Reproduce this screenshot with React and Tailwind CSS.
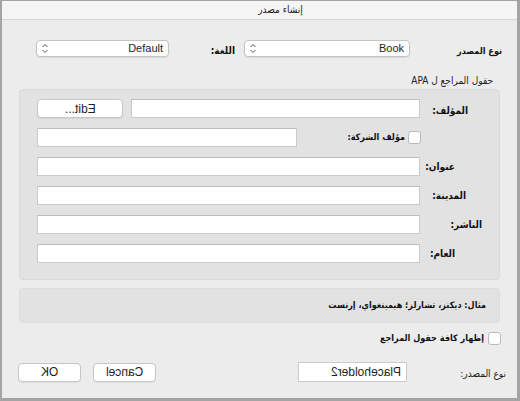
import React from "react";

const font = { fontFamily: "'Liberation Sans', 'DejaVu Sans', sans-serif" };
const ar = { fontFamily: "'DejaVu Sans Condensed', 'DejaVu Sans', sans-serif" };

function Chevrons() {
  return (
    <svg width="8" height="11" viewBox="0 0 8 11" className="shrink-0">
      <path d="M1.5 4 L4 1.5 L6.5 4" fill="none" stroke="#555" strokeWidth="1" />
      <path d="M1.5 7 L4 9.5 L6.5 7" fill="none" stroke="#555" strokeWidth="1" />
    </svg>
  );
}

function Select({ value, w }) {
  return (
    <div
      className={`${w} h-[17px] bg-white rounded-[4px] border border-[#c4c4c4] shadow-[0_1px_1px_rgba(0,0,0,0.08)] flex items-center justify-between pl-[4px] pr-[5px]`}
      dir="rtl"
    >
      <span className="text-[11px] text-[#1e1e1e] leading-none">{value}</span>
      <Chevrons />
    </div>
  );
}

function Input({ w }) {
  return <div className={`${w} h-[19px] bg-white border border-[#cbcbcb] border-t-[#bdbdbd] shrink-0`} />;
}

function Mirror({ children }) {
  return (
    <span dir="ltr" className="inline-block [transform:scaleX(-1)] text-[12px] text-[#1e1e1e] leading-none">
      {children}
    </span>
  );
}

function Button({ w, label }) {
  return (
    <div className={`${w} h-[19px] bg-white rounded-[4px] border border-[#c6c6c6] shadow-[0_1px_1px_rgba(0,0,0,0.06)] flex items-center justify-center shrink-0`}>
      <Mirror>{label}</Mirror>
    </div>
  );
}

function Checkbox() {
  return <div className="w-[13px] h-[13px] bg-white rounded-[3px] border border-[#b9b9b9] shrink-0" />;
}

function Label({ children, bold = true, size = "text-[10px]", className = "" }) {
  return (
    <span
      style={ar}
      className={`${size} ${bold ? "font-bold text-[#111]" : "text-[#222]"} leading-none whitespace-nowrap ${className}`}
    >
      {children}
    </span>
  );
}

function FieldRow({ pr, label, inputW }) {
  return (
    <div className="flex items-center h-[19px]">
      <div className="w-[79px] shrink-0 flex" style={{ paddingRight: pr }}>
        <Label>{label}</Label>
      </div>
      <Input w={inputW} />
    </div>
  );
}

export default function App() {
  return (
    <div
      className="w-[520px] h-[401px] bg-[#ececec] border-t border-l-2 border-r-[3px] border-b-[3px] border-[#a4a4a4] flex flex-col overflow-hidden"
      style={font}
    >
      {/* Title bar */}
      <div className="h-[19px] shrink-0 bg-[#f5f5f5] border-b border-[#d6d6d6] flex items-center justify-center">
        <span dir="rtl" style={ar} className="text-[10px] text-[#222] leading-none pl-[42px]">إنشاء مصدر</span>
      </div>

      <div dir="rtl" className="flex flex-col">
        {/* Row 1 */}
        <div className="flex items-center h-[17px] mt-[20px] pr-[15px]">
          <div className="w-[92px] shrink-0">
            <Label size="text-[9px]">نوع المصدر</Label>
          </div>
          <Select value="Book" w="w-[166px]" />
          <div className="w-[75px] shrink-0 pr-[9px]">
            <Label>اللغة:</Label>
          </div>
          <Select value="Default" w="w-[133px]" />
        </div>

        {/* APA heading */}
        <div className="h-[12px] mt-[18px] pr-[24px] flex items-center">
          <Label bold={false}>حقول المراجع ل APA</Label>
        </div>

        {/* Group box */}
        <div className="mx-[17px] mt-[2px] h-[191px] bg-[#e2e2e2] border border-[#d9d9d9] rounded-[4px] pt-[9px] flex flex-col gap-[10px]">
          {/* Author */}
          <div className="flex items-center h-[19px]">
            <div className="w-[79px] shrink-0 pr-[31px]">
              <Label>المؤلف:</Label>
            </div>
            <Input w="w-[289px]" />
            <div className="w-[8px] shrink-0" />
            <Button w="w-[86px]" label="Edit..." />
          </div>
          {/* Corporate author */}
          <div className="flex items-center h-[19px]">
            <div className="w-[78px] shrink-0" />
            <Checkbox />
            <Label size="text-[9px]" className="mr-[3px]">مؤلف الشركة:</Label>
            <div className="flex-1" />
            <Input w="w-[260px]" />
            <div className="w-[17px] shrink-0" />
          </div>
          <FieldRow pr={44} label="عنوان:" inputW="w-[383px]" />
          <FieldRow pr={33} label="المدينة:" inputW="w-[383px]" />
          <FieldRow pr={17} label="الناشر:" inputW="w-[383px]" />
          <FieldRow pr={44} label="العام:" inputW="w-[383px]" />
        </div>

        {/* Example box */}
        <div className="mx-[17px] mt-[8px] h-[35px] bg-[#e2e2e2] border border-[#dcdcdc] rounded-[4px] flex items-center pr-[13px]">
          <Label size="text-[9px]">مثال: ديكنز، تشارلز؛ هيمينغواي، إرنست</Label>
        </div>

        {/* Show all fields */}
        <div className="flex items-center h-[13px] mt-[9px] pr-[16px]">
          <Checkbox />
          <Label size="text-[9px]" className="mr-[4px]">إظهار كافة حقول المراجع</Label>
        </div>

        {/* Bottom row */}
        <div className="flex items-center h-[20px] mt-[17px] pr-[11px]">
          <div className="w-[99px] shrink-0">
            <Label bold={false}>نوع المصدر:</Label>
          </div>
          <div className="w-[109px] h-[20px] bg-white border border-[#cbcbcb] flex items-center justify-start pr-[5px] shrink-0">
            <Mirror>Placeholder2</Mirror>
          </div>
          <div className="w-[142px] shrink-0" />
          <Button w="w-[63px]" label="Cancel" />
          <div className="w-[12px] shrink-0" />
          <Button w="w-[63px]" label="OK" />
        </div>
      </div>
    </div>
  );
}
